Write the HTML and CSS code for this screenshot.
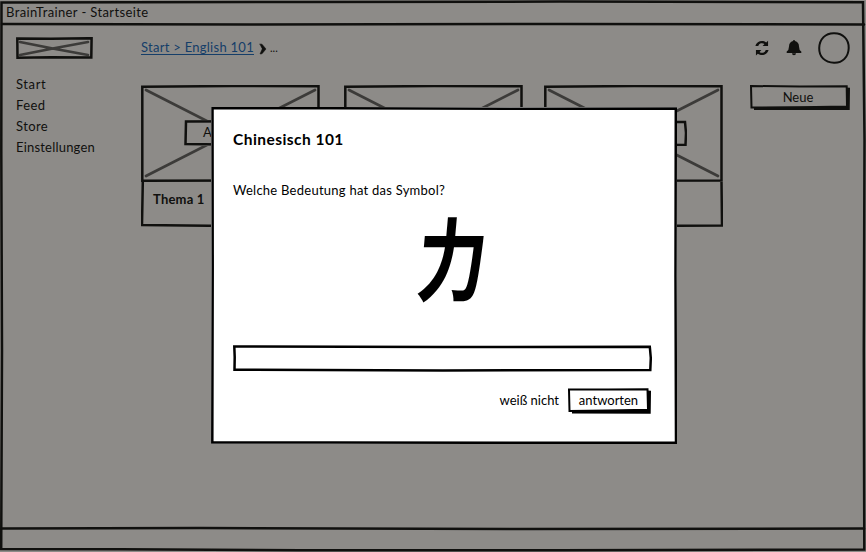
FILE: index.html
```html
<!DOCTYPE html>
<html lang="de">
<head>
<meta charset="utf-8">
<title>BrainTrainer - Startseite</title>
<link rel="stylesheet" href="styles.css">
</head>
<body>
<div class="window">
  <svg class="frame" viewBox="0 0 866 552"><path d="M1.5 2.5 L300 2 L560 1.6 L863 2.3 L864.5 140 L863.8 350 L864.3 549.5 L560 550.3 L300 550.2 L120 549.2 L1.2 549 L2 350 L1.3 150Z"/><path d="M2 24 L250 24.5 L560 24 L864 24.5M2 528.5 L200 528 L520 529 L864 528.6"/></svg>
  <header class="titlebar"><span class="t-title">BrainTrainer - Startseite</span></header>
  <div class="body">
    <aside class="sidebar">
      <div class="logo"><svg viewBox="0 0 77 22"><path class="cross" d="M4 5Q38 12 72 18M4 18Q38 11 72 5"/><path d="M1.3 1.5 L35 1.8 L75.6 1.2 L75.3 20.6 L35 20.2 L1.5 20.7Z"/></svg></div>
      <nav><a class="n1">Start</a><a class="n2">Feed</a><a class="n3">Store</a><a class="n4">Einstellungen</a></nav>
    </aside>
    <main>
      <div class="toolbar">
        <a class="crumb">Start &gt; English 101</a>
        <svg class="chevron" viewBox="0 0 8 12"><path d="M1 1 L3 1.200 L7 6 L3 10.800 L1 11 L3.200 6Z"/></svg>
        <span class="dots">...</span>
        <svg class="sync" viewBox="0 0 512 512"><path d="M450 20v170H275l60-60a125 125 0 0 0-200 62H45A220 220 0 0 1 390 76zM62 492V322h175l-60 60a125 125 0 0 0 200-62h90A220 220 0 0 1 122 436z"/></svg>
        <svg class="bell" viewBox="0 0 16 17"><path d="M7 2a1 1 0 0 1 2 0q4 1 4 5.500 0 3.600 2.300 5v1.500H.7v-1.500Q3 11 3 7.500 3 3 7 2M6 14.300h4a2 2 0 0 1-4 0"/></svg>
        <svg class="avatar" viewBox="0 0 32 32"><path d="M16 1.200C25 1 31 7.500 30.700 16 30.500 25 24.500 31 16 30.700 7 30.500 1 25 1.200 16 1.500 7 7.500 1 16 1.200Z"/></svg>
      </div>
      <div class="content">
        <div class="cards">
          <article class="card">
            <div class="picture"><svg class="frame" viewBox="0 0 179 97"><path class="cross" d="M5 5 L174 91M174 5 L5 91"/><path d="M1.300 1.800 L90 1 L177.500 1.300 L177.500 95.500 L1.300 95.700Z"/></svg><span class="chip"><svg class="frame" viewBox="0 0 105 26"><path d="M2 1.500 L102.500 1.300 L103.500 24.500 L40 24.500 L1.500 24Z"/></svg>A</span></div>
            <div class="caption"><svg class="frame" viewBox="0 0 179 45"><path d="M1.800 0 L1 43 L90 44 L178 43.500 L177.500 0"/></svg>Thema 1</div>
          </article>
          <article class="card">
            <div class="picture"><svg class="frame" viewBox="0 0 179 97"><path class="cross" d="M5 5 L174 91M174 5 L5 91"/><path d="M1.300 1.800 L90 1 L177.500 1.300 L177.500 95.500 L1.300 95.700Z"/></svg></div>
            <div class="caption"><svg class="frame" viewBox="0 0 179 45"><path d="M1.800 0 L1 43 L90 44 L178 43.500 L177.500 0"/></svg></div>
          </article>
          <article class="card">
            <div class="picture"><svg class="frame" viewBox="0 0 179 97"><path class="cross" d="M5 5 L174 91M174 5 L5 91"/><path d="M1.300 1.800 L90 1 L177.500 1.300 L177.500 95.500 L1.300 95.700Z"/></svg><span class="chip wide"><svg class="frame" viewBox="0 0 105 26"><path d="M1.500 2 L103 2 L104 13 L103.500 25 L1 24.500Z"/></svg></span></div>
            <div class="caption"><svg class="frame" viewBox="0 0 179 45"><path d="M1.800 0 L1 43 L90 44 L178 43.500 L177.500 0"/></svg></div>
          </article>
        </div>
        <button class="btn new"><svg class="frame" viewBox="0 0 100 25"><path class="shade" d="M96 2.500 L100 2.800 L99.700 25 L4 25 L4 22 L96 21.500Z"/><path class="thin" d="M1 1 L50 1.500 L96.700 1.300 L97 21.600 L50 22.300 L1.500 22.500Z"/></svg><span>Neue</span></button>
      </div>
    </main>
  </div>
</div>
<section class="modal">
  <svg class="frame" viewBox="0 0 466 337"><path d="M1.500 1.200 L120 1.300 L300 1.800 L464.800 1.600 L464.500 170 L465 335.800 L300 335.800 L120 335.500 L1.300 335.500 L1.700 160Z"/></svg>
  <h1>Chinesisch 101</h1>
  <p class="question">Welche Bedeutung hat das Symbol?</p>
  <div class="symbol"><span lang="zh">力</span></div>
  <div class="answer"><svg class="frame" viewBox="0 0 419 27"><path d="M1.300 1.500 L210 2 L416.800 1.700 L417.800 13 L417.300 25 L210 25.500 L1.500 24.700 L1.700 12Z"/></svg></div>
  <div class="actions"><a class="skip">weiß nicht</a><button class="btn send"><svg class="frame" viewBox="0 0 83 26"><path class="shade" d="M79 2.500 L83 2.800 L82.700 25.800 L4 25.500 L4 23 L79 21.500Z"/><path class="thin" d="M1 1.400 L40 1.600 L79.500 1.300 L80 21.700 L40 22.500 L1.500 23Z"/></svg><span>antworten</span></button></div>
</section>
</body>
</html>
```
FILE: styles.css
```css
* { box-sizing: border-box; }
body { margin: 0; width: 866px; height: 552px; overflow: hidden; position: relative; background: #8d8b88; color: #10100e; font: 13px/21px Lato, "Noto Sans CJK SC", sans-serif; }
svg { display: block; fill: none; stroke: #10100e; stroke-width: 2.5; stroke-linejoin: miter; stroke-linecap: round; }
.frame { position: absolute; inset: 0; width: 100%; height: 100%; }
svg .cross { stroke: #3c3b39; stroke-width: 2.7; }
.window { height: 552px; position: relative; }
.titlebar { height: 25px; padding: 2px 6px; }
.t-title { letter-spacing: .38px; }
.body { display: flex; height: 503px; position: relative; }
.sidebar { width: 141px; padding: 12px 0 0 16px; }
.logo { width: 77px; height: 22px; }
nav { display: flex; flex-direction: column; align-items: flex-start; padding-top: 15px; }
.n1 { letter-spacing: .6px; }
.n2, .n3 { letter-spacing: .4px; }
.n4 { letter-spacing: .2px; }
main { flex: 1; }
.toolbar { padding: 5px 16px 0 0; display: flex; align-items: center; height: 40px; }
.crumb { color: #153e69; text-decoration: underline; text-decoration-thickness: 1px; text-underline-offset: 2px; text-decoration-skip-ink: none; white-space: nowrap; letter-spacing: .27px; }
.chevron { width: 8px; height: 12px; margin: 2px 3px 0 5px; fill: #10100e; stroke-width: .5; }
.dots { flex: 1; font-size: 11px; }
.sync { width: 16px; height: 16px; fill: #10100e; stroke: none; margin-right: 16px; }
.bell { width: 16px; height: 17px; fill: #10100e; stroke: none; margin-right: 16px; }
.avatar { width: 32px; height: 32px; stroke-width: 2; }
.content { display: flex; padding-top: 20px; }
.cards { display: grid; grid-template-columns: 203px 200px 206px; }
.card { width: 179px; }
.picture { height: 97px; position: relative; display: flex; align-items: center; justify-content: center; padding-bottom: 1px; }
.chip { position: relative; width: 105px; height: 26px; padding: 2px 0 0 19px; background: #8d8b88; transform: translateX(6px); }
.wide { transform: translateX(1px); }
.caption { position: relative; height: 45px; padding: 7px 12px; font-weight: 700; letter-spacing: .2px; }
.btn { position: relative; border: 0; background: none; color: inherit; font: inherit; padding: 0; }
svg .thin { stroke-width: 2; }
svg .shade { fill: #10100e; stroke: none; }
.new { width: 100px; height: 25px; padding: 0 4px 1px 0; }
.btn span { position: relative; }
.modal { position: absolute; left: 211px; top: 107px; width: 466px; height: 337px; padding: 22px 26px 0 22px; background: #fff; color: #000; }
.modal svg { stroke: #000; }
.modal svg .shade { fill: #000; stroke: none; }
.modal h1 { margin: 0; font-size: 15.5px; line-height: 21px; letter-spacing: .45px; }
.question { margin: 30px 0 0; letter-spacing: .25px; }
.symbol { height: 137px; display: flex; justify-content: center; margin-top: 7px; font: 700 76px/100px "Noto Sans CJK SC", sans-serif; }
.symbol span { height: 100px; transform: translate(11px, -3px) skewX(-5deg) scale(.92, 1.19); }
.answer { position: relative; height: 27px; width: 419px; }
.actions { display: flex; justify-content: flex-end; align-items: center; gap: 9px; margin-top: 16px; height: 26px; }
.send { width: 83px; height: 26px; padding: 0 2px 2px 0; }
.skip { padding-bottom: 2px; }
```
